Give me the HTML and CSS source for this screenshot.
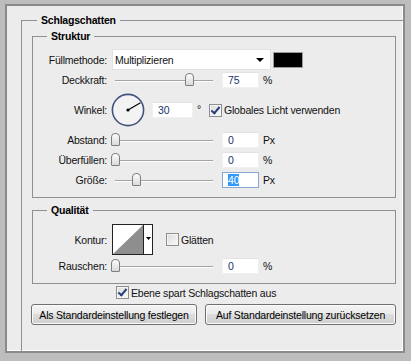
FILE: index.html
```html
<!DOCTYPE html>
<html lang="de">
<head>
    <meta charset="UTF-8">
    <title>Schlagschatten</title>
    <link rel="stylesheet" href="styles.css">
</head>
<body>
    <div class="frame">
        <div class="panel">
            <fieldset class="group outer">
                <legend>Schlagschatten</legend>

                <fieldset class="group struktur">
                    <legend>Struktur</legend>

                    <div class="row sel-row">
                        <span class="lbl">Füllmethode:</span>
                        <div class="select">
                            <span>Multiplizieren</span>
                            <span class="arrow"></span>
                        </div>
                        <span class="swatch"></span>
                    </div>

                    <div class="row deck-row">
                        <span class="lbl">Deckkraft:</span>
                        <div class="slider"><span class="track"></span><span class="thumb" style="left: 74px"></span></div>
                        <span class="num">75</span>
                        <span class="unit">%</span>
                    </div>

                    <div class="row winkel-row">
                        <span class="lbl">Winkel:</span>
                        <svg class="dial" width="34" height="34" viewBox="0 0 34 34">
                            <circle cx="17" cy="17" r="15.6" fill="#f3f3f3" stroke="#44527e" stroke-width="1.6"/>
                            <line x1="17" y1="17" x2="29.5" y2="9.8" stroke="#000" stroke-width="1.2"/>
                            <circle cx="17" cy="17" r="1.6" fill="#000"/>
                        </svg>
                        <span class="num angle">30</span>
                        <span class="unit deg">°</span>
                        <label class="check light">
                            <span class="cb on"></span>Globales Licht verwenden
                        </label>
                    </div>

                    <div class="row abst-row">
                        <span class="lbl">Abstand:</span>
                        <div class="slider"><span class="track"></span><span class="thumb" style="left: 0px"></span></div>
                        <span class="num">0</span>
                        <span class="unit">Px</span>
                    </div>

                    <div class="row small-gap">
                        <span class="lbl">Überfüllen:</span>
                        <div class="slider"><span class="track"></span><span class="thumb" style="left: 0px"></span></div>
                        <span class="num">0</span>
                        <span class="unit">%</span>
                    </div>

                    <div class="row small-gap">
                        <span class="lbl">Größe:</span>
                        <div class="slider"><span class="track"></span><span class="thumb" style="left: 21px"></span></div>
                        <span class="num focus"><span class="hl">40</span></span>
                        <span class="unit">Px</span>
                    </div>
                </fieldset>

                <fieldset class="group qualitaet">
                    <legend>Qualität</legend>

                    <div class="row kontur-row">
                        <span class="lbl">Kontur:</span>
                        <svg class="kontur" width="41" height="31" viewBox="0 0 41 31">
                            <rect x="0.5" y="0.5" width="40" height="30" fill="#fff" stroke="#222"/>
                            <polygon points="1,30 31,1 31,30" fill="#8e8e8e"/>
                            <line x1="31.5" y1="1" x2="31.5" y2="30" stroke="#222"/>
                            <polygon points="34,13 39,13 36.5,16" fill="#000"/>
                        </svg>
                        <label class="check smooth">
                            <span class="cb"></span>Glätten
                        </label>
                    </div>

                    <div class="row rausch-row">
                        <span class="lbl">Rauschen:</span>
                        <div class="slider"><span class="track"></span><span class="thumb" style="left: 0px"></span></div>
                        <span class="num">0</span>
                        <span class="unit">%</span>
                    </div>
                </fieldset>

                <label class="check knockout">
                    <span class="cb on"></span>Ebene spart Schlagschatten aus
                </label>

                <div class="buttons">
                    <button class="btn first">Als Standardeinstellung festlegen</button>
                    <button class="btn second">Auf Standardeinstellung zurücksetzen</button>
                </div>
            </fieldset>
        </div>
    </div>
</body>
</html>
```

FILE: styles.css
```css
body {
    margin: 0;
    font-family: "Liberation Sans", Arial, sans-serif;
    font-size: 10.5px;
    letter-spacing: -0.2px;
    color: #111;
    background: #bdbdbd;
}

/* grauer Fensterrahmen */
.frame {
    width: 411px;
    height: 361px;
    box-sizing: border-box;
    padding: 4px 8px 8px 5px;
    display: flex;
}

.panel {
    flex: 1;
    display: flex;
    flex-direction: column;
    background: #ececec;
    border: 2px solid #8a8a8a;
    box-shadow: inset -1px -1px 0 #fff;
    padding: 0 0 0 14px;
}

/* Gruppen */
.group {
    margin: 0;
    border: 1px solid #8f8f8f;
    min-width: 0;
}

.group legend {
    padding: 0 4px;
    font-weight: bold;
    line-height: 13px;
    color: #000;
}

.outer {
    flex: 1;
    margin-top: 8px;
    padding: 0 7px 0 10px;
    border-right: none;
    border-bottom: none;
}

.outer > legend {
    margin-left: 5px;
}

.struktur,
.qualitaet {
    padding: 6px 0 9px 0;
}

.struktur {
    margin-top: 3px;
}

.qualitaet {
    margin-top: 6px;
    padding-top: 7px;
}

.struktur > legend,
.qualitaet > legend {
    margin-left: 14px;
}

/* Zeilen */
.row {
    display: flex;
    align-items: center;
    height: 16px;
    white-space: nowrap;
}

.lbl {
    width: 74px;
    flex: none;
    text-align: right;
    color: #111;
}

.sel-row { height: 21px; }
.deck-row { margin-top: 2px; }
.winkel-row { height: 34px; margin-top: 5px; }
.abst-row { margin-top: 5px; }
.small-gap { margin-top: 4px; }
.kontur-row { height: 31px; }
.rausch-row { margin-top: 3px; }

.select {
    margin-left: 5px;
    width: 159px;
    height: 21px;
    box-sizing: border-box;
    background: #fff;
    border: 1px solid #e2e2e2;
    display: flex;
    align-items: center;
    justify-content: space-between;
    padding: 0 6px 0 2px;
}

.arrow {
    width: 0;
    height: 0;
    border-left: 4px solid transparent;
    border-right: 4px solid transparent;
    border-top: 4px solid #000;
}

.swatch {
    margin-left: 2px;
    width: 30px;
    height: 16px;
    box-sizing: border-box;
    background: #000;
    border: 1px solid #9a9a9a;
}

/* Schieberegler */
.slider {
    position: relative;
    flex: none;
    margin-left: 4px;
    width: 104px;
    height: 16px;
}

.track {
    position: absolute;
    left: 4px;
    right: 2px;
    top: 8px;
    border-top: 1px solid #a3a3a3;
    border-bottom: 1px solid #fff;
}

.thumb {
    position: absolute;
    top: 1px;
    width: 7px;
    height: 11px;
    background: linear-gradient(#fdfdfd, #dadada);
    border: 1px solid #7e7e7e;
    border-radius: 4px 4px 1px 1px;
}

.num {
    flex: none;
    margin-left: 7px;
    width: 37px;
    height: 16px;
    box-sizing: border-box;
    background: #fff;
    border: 1px solid #f0f0f0;
    border-top-color: #e3e3e3;
    padding-left: 5px;
    line-height: 14px;
    color: #1c2f6e;
}

.num.angle {
    margin-left: 7px;
    width: 41px;
}

.num.focus {
    border: 1px solid #87a7cf;
}

.hl {
    background: #3399ff;
    color: #fff;
}

.unit {
    margin-left: 4px;
    color: #111;
}

.unit.deg {
    align-self: flex-start;
    margin-top: 10px;
}

.dial {
    flex: none;
    margin-left: 4px;
}

/* Kontrollkästchen */
.check {
    display: flex;
    align-items: center;
    white-space: nowrap;
    color: #111;
}

.cb {
    flex: none;
    width: 13px;
    height: 13px;
    box-sizing: border-box;
    border: 1px solid #8e8f8f;
    background: linear-gradient(135deg, #dcdcdc, #fafafa);
    box-shadow: inset 0 0 0 1px #f4f4f4;
    margin-right: 2px;
    position: relative;
}

.cb.on::after {
    content: "";
    position: absolute;
    left: 3px;
    top: 0px;
    width: 3px;
    height: 7px;
    border-right: 2px solid #263f7c;
    border-bottom: 2px solid #263f7c;
    transform: rotate(40deg);
}

.light {
    margin-left: 8px;
}

.kontur {
    flex: none;
    margin-left: 5px;
}

.smooth {
    margin-left: 13px;
}

.knockout {
    margin: 2px 0 0 84px;
    height: 13px;
}

/* Knoepfe */
.buttons {
    display: flex;
    margin: 5px 0 0 -1px;
}

.btn {
    flex: none;
    height: 21px;
    border: 1px solid #707070;
    border-radius: 3px;
    background: linear-gradient(#f4f4f4 0%, #ebebeb 45%, #dddddd 50%, #cfcfcf 100%);
    box-shadow: inset 0 0 0 1px #fbfbfb;
    font-family: inherit;
    font-size: 10.5px;
    letter-spacing: -0.2px;
    color: #000;
    white-space: nowrap;
    padding: 0;
}

.btn.first {
    width: 166px;
}

.btn.second {
    width: 191px;
    margin-left: 8px;
}
```
